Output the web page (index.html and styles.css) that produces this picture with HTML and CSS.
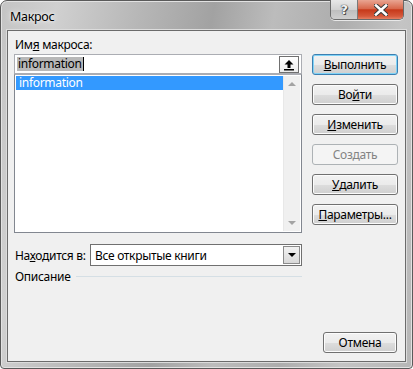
FILE: index.html
```html
<!DOCTYPE html>
<html>
<head>
	<meta charset="utf-8">
	<title>Макрос</title>
	<link rel="stylesheet" href="styles.css">
</head>
<body>
<div class="window">
	<div class="titlebar">
		<div class="caption">Макрос</div>
		<div class="capbtns">
			<div class="capbtn help">?</div>
			<div class="capbtn close">
				<svg width="14" height="12" viewBox="0 0 14 12">
					<path d="M2 1.5 L12 10.5 M12 1.5 L2 10.5" stroke="#3a3a3a" stroke-width="4.6" stroke-linecap="square"/>
					<path d="M2 1.5 L12 10.5 M12 1.5 L2 10.5" stroke="#ffffff" stroke-width="2.6" stroke-linecap="square"/>
				</svg>
			</div>
		</div>
	</div>

	<div class="client">
		<div class="main">
			<div class="leftcol">
				<div class="label">Им<u>я</u> макроса:</div>
				<div class="namebox">
					<span class="sel">information</span><span class="caret"></span>
					<div class="upbtn">
						<svg width="12" height="12" viewBox="0 0 12 12">
							<path d="M6 1 L10.5 5.5 L7.5 5.5 L7.5 9 L4.5 9 L4.5 5.5 L1.5 5.5 Z" fill="#000"/>
							<rect x="1" y="10" width="10" height="1.5" fill="#000"/>
						</svg>
					</div>
				</div>
				<div class="listbox">
					<div class="items">
						<div class="item selected">information</div>
					</div>
					<div class="scroll">
						<div class="arrow up"></div>
						<div class="arrow down"></div>
					</div>
				</div>
				<div class="location">
					<div class="label">На<u>х</u>одится в:</div>
					<div class="combo">
						<span>Все открытые книги</span>
						<div class="dropbtn"><div class="tri"></div></div>
					</div>
				</div>
				<div class="desc">
					<span>Описание</span>
					<div class="line"></div>
				</div>
			</div>
			<div class="rightcol">
				<div class="btn default"><u>В</u>ыполнить</div>
				<div class="btn">Во<u>й</u>ти</div>
				<div class="btn"><u>И</u>зменить</div>
				<div class="btn disabled">Создать</div>
				<div class="btn"><u>У</u>далить</div>
				<div class="btn"><u>П</u>араметры...</div>
			</div>
		</div>
		<div class="footer">
			<div class="btn cancel">Отмена</div>
		</div>
	</div>
</div>
</body>
</html>
```

FILE: styles.css
```css
*{
	padding: 0px;
	margin: 0px;
	box-sizing: border-box;
}
body{
	background: #ffffff;
	font-family: "Noto Sans", sans-serif;
	font-size: 12px;
	letter-spacing: -0.3px;
	color: #000;
}
.window{
	width: 413px;
	height: 369px;
	border: 1px solid #5a5a5a;
	border-radius: 7px 7px 4px 4px;
	background: linear-gradient(100deg, #c4c4c4 0%, #d0d0d0 12%, #b6b6b6 30%, #a2a2a2 45%, #bcbcbc 58%, #adadad 72%, #c4c4c4 85%, #b6b6b6 100%);
	display: flex;
	flex-direction: column;
	padding: 0 6px 6px 6px;
	box-shadow: inset 0 0 0 1px #e2e2e2;
}
.titlebar{
	height: 29px;
	display: flex;
	justify-content: space-between;
	align-items: flex-start;
}
.caption{
	padding: 7px 0 0 3px;
	font-size: 12.5px;
	color: #000;
	text-shadow: 0 0 6px #f4f4f4, 0 0 3px #f4f4f4;
}
.capbtns{
	display: flex;
	margin-top: -1px;
	margin-right: 2px;
	border: 1px solid #6a6a6a;
	border-top: none;
	border-radius: 0 0 5px 5px;
	overflow: hidden;
	box-shadow: 0 1px 0 #e8e8e8;
}
.capbtn{
	height: 19px;
	display: flex;
	align-items: center;
	justify-content: center;
}
.help{
	width: 27px;
	background: linear-gradient(#e8e8e8, #d2d2d2 50%, #bdbdbd 51%, #cfcfcf);
	border-right: 1px solid #7a7a7a;
	font-family: "DejaVu Sans", sans-serif;
	font-weight: bold;
	font-size: 13px;
	color: #f4f4f4;
	text-shadow: 0 0 1px #333, 0 0 1px #333, 1px 1px 0 #555;
}
.close{
	width: 45px;
	background: linear-gradient(#e9a592, #d8694d 45%, #c6391a 52%, #d5583a 85%, #e47f62);
}
.client{
	flex: 1;
	border: 1px solid #6b6b6b;
	background: #f0f0f0;
	display: flex;
	flex-direction: column;
	padding: 0 7px 8px 6px;
	box-shadow: 0 0 0 1px #dcdcdc;
}
.main{
	display: flex;
	gap: 10px;
}
.leftcol{
	width: 288px;
}
.label{
	height: 23px;
	padding-top: 5px;
	padding-left: 1px;
}
.namebox{
	height: 20px;
	border: 1px solid #abadb3;
	background: #fff;
	display: flex;
	align-items: center;
	padding-left: 2px;
	position: relative;
}
.sel{
	background: #b8b8b8;
	color: #000;
	line-height: 14px;
	padding: 0 1px;
}
.caret{
	width: 1px;
	height: 14px;
	background: #000;
}
.upbtn{
	position: absolute;
	right: 2px;
	top: 1px;
	width: 20px;
	height: 17px;
	border: 1px solid #707070;
	background: linear-gradient(#ffffff, #ececec);
	display: flex;
	align-items: center;
	justify-content: center;
}
.listbox{
	height: 159px;
	border: 1px solid #828790;
	border-top-color: #abadb3;
	background: #fff;
	display: flex;
	padding: 1px;
}
.items{
	flex: 1;
}
.item{
	height: 14px;
	line-height: 13px;
	padding-left: 3px;
}
.item.selected{
	background: #3399ff;
	color: #fff;
}
.scroll{
	width: 17px;
	background: #f0f0f0;
	border-left: 1px solid #e8e8e8;
	display: flex;
	flex-direction: column;
	justify-content: space-between;
	align-items: center;
	padding: 6px 0 6px 0;
}
.arrow{
	width: 0;
	height: 0;
	border-left: 4px solid transparent;
	border-right: 4px solid transparent;
}
.arrow.up{
	border-bottom: 4px solid #a3a3a3;
}
.arrow.down{
	border-top: 4px solid #a3a3a3;
}
.location{
	display: flex;
	align-items: center;
	margin-top: 11px;
}
.location .label{
	width: 76px;
	height: auto;
	padding: 0 0 0 1px;
}
.combo{
	width: 212px;
	height: 22px;
	border: 1px solid #707070;
	background: #fff;
	display: flex;
	align-items: center;
	justify-content: space-between;
	padding-left: 4px;
}
.dropbtn{
	width: 17px;
	height: 18px;
	margin-right: 1px;
	border: 1px solid #8a8a8a;
	background: linear-gradient(#f2f2f2, #d8d8d8);
	display: flex;
	align-items: center;
	justify-content: center;
}
.tri{
	width: 0;
	height: 0;
	border-left: 4px solid transparent;
	border-right: 4px solid transparent;
	border-top: 4px solid #000;
}
.desc{
	display: flex;
	align-items: center;
	gap: 6px;
	margin-top: 2px;
	padding-left: 1px;
}
.desc .line{
	flex: 1;
	height: 1px;
	background: #d5dfe5;
}
.rightcol{
	width: 86px;
	padding-top: 23px;
	display: flex;
	flex-direction: column;
	gap: 9px;
}
.btn{
	height: 21px;
	border: 1px solid #707070;
	border-radius: 3px;
	background: linear-gradient(#f2f2f2 0%, #ebebeb 50%, #dddddd 51%, #cfcfcf 100%);
	box-shadow: inset 0 0 0 1px #fcfcfc;
	display: flex;
	align-items: center;
	justify-content: center;
	color: #000;
}
.btn.default{
	border-color: #3c7fb1;
	box-shadow: inset 0 0 0 1px #7fd3f7;
}
.btn.disabled{
	border-color: #adb2b5;
	background: #f4f4f4;
	box-shadow: none;
	color: #838383;
}
.footer{
	margin-top: auto;
	display: flex;
	justify-content: flex-end;
	padding-right: 1px;
}
.btn.cancel{
	width: 74px;
}
```
